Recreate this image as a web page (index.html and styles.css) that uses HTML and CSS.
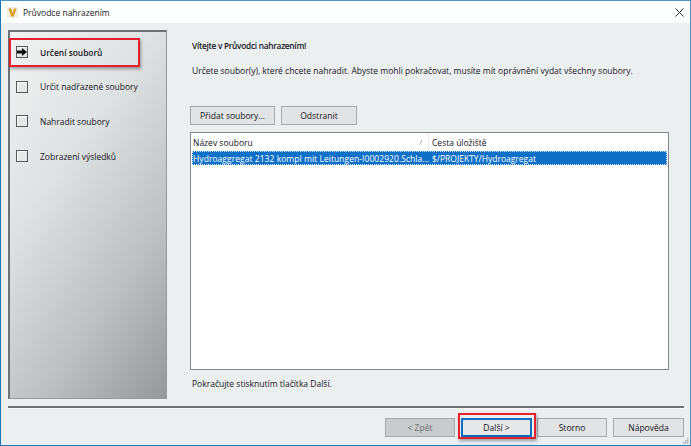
FILE: index.html
```html
<!DOCTYPE html>
<html lang="cs">
<head>
<meta charset="utf-8">
<title>Průvodce nahrazením</title>
<link rel="stylesheet" href="styles.css">
</head>
<body>
<div class="window">
  <div class="titlebar">
    <svg class="app-icon" width="11" height="11" viewBox="0 0 11 11"><rect width="11" height="11" fill="#f1eee0"/><path d="M1.500 1.500h2.700l1.400 4.700 1.300-4.700h2.600L6.800 9.500H4.200z" fill="#dfa023"/></svg>
    <span class="title">Průvodce nahrazením</span>
    <svg class="close" width="9" height="9" viewBox="0 0 9 9"><path d="M.5.5l8 8M8.500.5l-8 8" stroke="#333" stroke-width="1" fill="none"/></svg>
  </div>
  <div class="body">
    <div class="main">
      <nav class="sidebar">
        <div class="step current"><span class="box"><svg width="10" height="8" viewBox="0 0 10 8"><path d="M0 2.500h5V0l5 4-5 4V5.500H0z" fill="#111"/></svg></span><span class="step-label">Určení souborů</span></div>
        <div class="step"><span class="box"></span><span class="step-label">Určit nadřazené soubory</span></div>
        <div class="step"><span class="box"></span><span class="step-label">Nahradit soubory</span></div>
        <div class="step"><span class="box"></span><span class="step-label">Zobrazení výsledků</span></div>
      </nav>
      <section class="content">
        <h1 class="heading">Vítejte v Průvodci nahrazením!</h1>
        <p class="intro">Určete soubor(y), které chcete nahradit. Abyste mohli pokračovat, musíte mít oprávnění vydat všechny soubory.</p>
        <div class="file-buttons">
          <button class="btn btn-add">Přidat soubory...</button>
          <button class="btn btn-remove">Odstranit</button>
        </div>
        <div class="table">
          <div class="thead">
            <div class="col-name">Název souboru<span class="sort">/</span></div>
            <div class="col-path">Cesta úložiště</div>
          </div>
          <div class="row selected">
            <div class="col-name">Hydroaggregat 2132 kompl mit Leitungen-I0002920.Schla...</div>
            <div class="col-path">$/PROJEKTY/Hydroagregat</div>
          </div>
        </div>
        <p class="hint">Pokračujte stisknutím tlačítka Další.</p>
      </section>
    </div>
    <div class="separator"></div>
    <div class="footer">
      <button class="btn btn-foot disabled">&lt; Zpět</button>
      <button class="btn btn-foot default">Další &gt;</button>
      <button class="btn btn-foot">Storno</button>
      <button class="btn btn-foot wide">Nápověda</button>
    </div>
  </div>
  <svg class="grip" width="6" height="6" viewBox="0 0 6 6"><path d="M4 0h1.500v1.500H4zM2 2h1.500v1.500H2zM4 2h1.500v1.500H4zM0 4h1.500v1.500H0zM2 4h1.500v1.500H2zM4 4h1.500v1.500H4z" fill="#a9adb0"/></svg>
</div>
</body>
</html>
```
FILE: styles.css
```css
* { box-sizing: border-box; }
html, body { margin: 0; padding: 0; }
body { width: 691px; height: 446px; overflow: hidden; font-family: "Open Sans", "Noto Sans", sans-serif; font-size: 8.5px; color: #14141c; }
.window { width: 691px; height: 446px; display: flex; flex-direction: column; border: 1px solid #1a78b8; border-top-color: #4a94c8; border-right-color: #4a94c8; background: #eceff0; position: relative; }
.titlebar { height: 22px; flex: none; background: #fdfefe; display: flex; align-items: center; padding: 0 6px 0 6px; }
.app-icon { flex: none; margin-right: 5px; }
.title { flex: 1; font-size: 8.5px; color: #222; }
.close { flex: none; }
.body { flex: 1; display: flex; flex-direction: column; padding: 7px 6px 0 7px; min-height: 0; }
.main { display: flex; height: 369px; flex: none; }
.sidebar { width: 159px; flex: none; border: 1px solid #96999b; border-top: 2px solid #6e7174; border-left: 2px solid #6e7174; background: linear-gradient(125deg, #f1f3f3 0%, #dfe2e2 35%, #bdc0c1 70%, #96999a 100%); padding: 12px 0 0 6px; display: flex; flex-direction: column; gap: 18px; }
.step { height: 16.6px; display: flex; align-items: center; position: relative; }
.box { width: 12px; height: 12px; flex: none; border: 1px solid #55585a; background: #e6e8e8; box-shadow: inset 1px 1px 0 #fff; display: flex; align-items: center; justify-content: center; margin-right: 12px; }
.step-label { white-space: nowrap; font-size: 8.5px; }
.current .step-label { font-weight: 600; font-size: 8.4px; }
.current::after { content: ""; position: absolute; left: -7px; top: -6px; width: 127px; height: 25px; border: 2px solid #e3202e; box-shadow: 1px 2px 3px rgba(0,0,0,.35); }
.content { flex: 1; min-width: 0; padding: 10px 0 0 23px; display: flex; flex-direction: column; }
.heading { margin: 0 0 0 2px; font-size: 8.3px; font-weight: 600; line-height: 12px; white-space: nowrap; letter-spacing: -0.27px; }
.intro { margin: 13px 0 0 2px; line-height: 12px; white-space: nowrap; }
.file-buttons { display: flex; gap: 6px; margin-top: 29px; }
.btn { height: 19px; padding: 0; font: inherit; color: #14141c; background: #e1e3e4; border: 1px solid #a6a9ab; border-radius: 0; }
.btn-add { width: 85px; }
.btn-remove { width: 76px; }
.table { margin-top: 7px; width: 479px; height: 238px; flex: none; border: 1px solid #82878c; background: #fff; padding: 0 1px; }
.thead, .row { display: flex; align-items: center; }
.thead { height: 18px; }
.row { height: 14px; }
.col-name { width: 237px; flex: none; padding-left: 1px; position: relative; white-space: nowrap; }
.selected .col-name { letter-spacing: 0.05px; }
.col-path { padding-left: 3px; white-space: nowrap; }
.thead .col-name { height: 18px; line-height: 19px; border-right: 1px solid #e8eaeb; }
.thead .col-path { line-height: 19px; }
.sort { position: absolute; right: 6px; top: 0; font-size: 7px; color: #777; }
.selected { background: #0f70c8; color: #fff; outline: 1px dotted #cfe2f5; outline-offset: -1px; }
.hint { margin: 8px 0 0 2px; line-height: 12px; }
.separator { height: 3px; flex: none; margin-top: 7px; background: linear-gradient(#6d7173 0 2px, #f7f8f8 2px); }
.footer { display: flex; justify-content: flex-end; gap: 6px; padding: 9px 0 0; }
.btn-foot { width: 70px; }
.wide { width: 71px; }
.disabled { background: #c9cccd; color: #6b6e70; }
.default { position: relative; border: 2px solid #0a6dbd; width: 71px; margin-right: -1px; background: #e6e8e9; }
.default::after { content: ""; position: absolute; left: -5px; top: -7px; right: -6px; bottom: -4px; border: 2px solid #e3202e; box-shadow: 1px 2px 3px rgba(0,0,0,.35); }
.grip { position: absolute; right: 1px; bottom: 1px; }
```
